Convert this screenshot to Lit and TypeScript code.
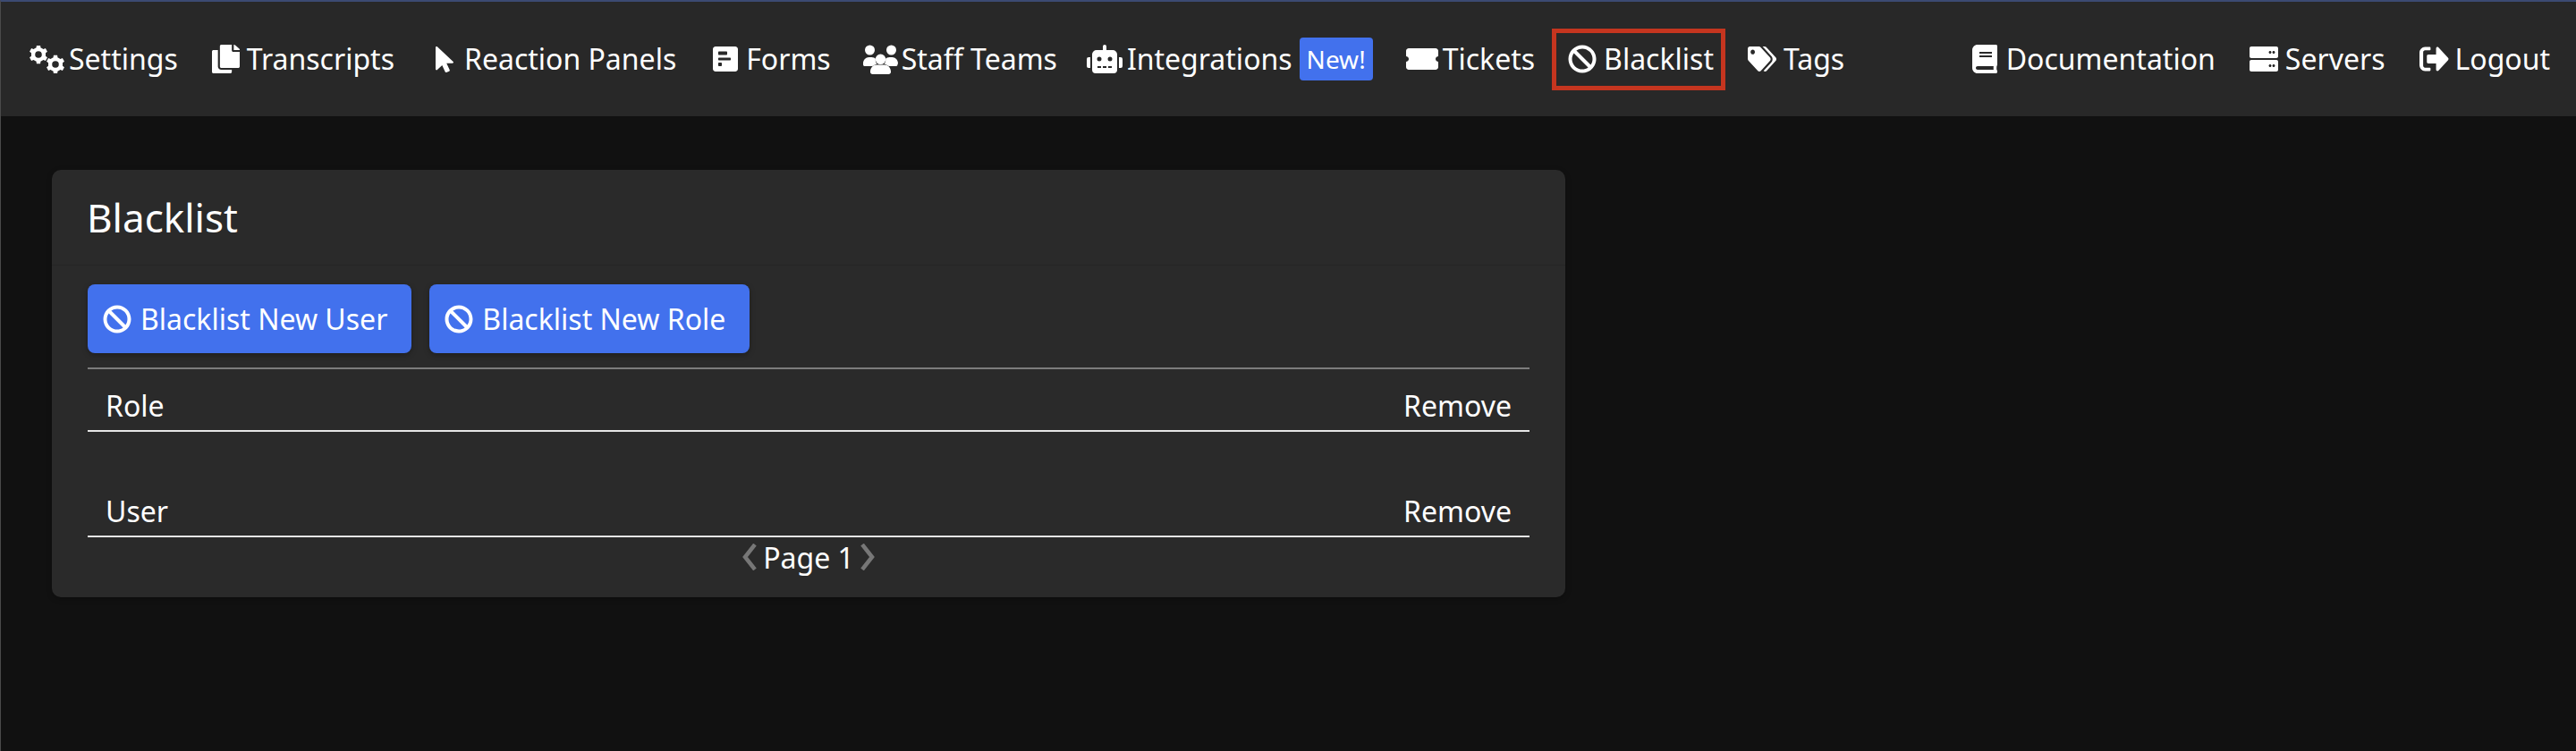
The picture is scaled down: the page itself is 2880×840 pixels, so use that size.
import { LitElement, css, html, svg } from "lit";
import { customElement } from "lit/decorators.js";

// six tooth gear with a round hole, used for the settings icon
const gear = (cx: number, cy: number, r: number) => {
  let d = "";
  const teeth = 6;
  for (let i = 0; i < teeth; i++) {
    const a = (i * Math.PI * 2) / teeth - Math.PI / 2;
    const spots = [
      [-0.3, r * 0.78],
      [-0.2, r],
      [0.2, r],
      [0.3, r * 0.78],
    ];
    for (const [da, len] of spots) {
      const x = (cx + Math.cos(a + da) * len).toFixed(2);
      const y = (cy + Math.sin(a + da) * len).toFixed(2);
      d += `${d ? "L" : "M"}${x} ${y}`;
    }
  }
  d += "Z";
  const h = r * 0.36;
  d += `M${cx - h} ${cy}a${h} ${h} 0 1 0 ${h * 2} 0a${h} ${h} 0 1 0 ${-h * 2} 0Z`;
  return d;
};

const BAN =
  "M256 8C119.034 8 8 119.033 8 256s111.034 248 248 248 248-111.034 248-248S392.967 8 256 8zm130.108 117.892c65.448 65.448 70 165.481 20.677 235.637L150.47 105.216c70.204-49.356 170.226-44.735 235.638 20.676zM125.892 386.108c-65.448-65.448-70-165.481-20.677-235.637L361.53 406.784c-70.203 49.356-170.226 44.736-235.638-20.676z";

interface Icon {
  box: string;
  w: number;
  h: number;
  d: string;
}

const ICONS: Record<string, Icon> = {
  cogs: { box: "0 0 39 31", w: 39, h: 31, d: gear(10, 10, 10.5) + gear(29, 21, 10.5) },
  copy: {
    box: "0 0 448 512",
    w: 31,
    h: 32,
    d: "M320 448v40c0 13.255-10.745 24-24 24H24c-13.255 0-24-10.745-24-24V120c0-13.255 10.745-24 24-24h72v296c0 30.879 25.121 56 56 56h168zm0-344V0H152c-13.255 0-24 10.745-24 24v368c0 13.255 10.745 24 24 24h272c13.255 0 24-10.745 24-24V128H344c-13.2 0-24-10.8-24-24zm120.971-31.029L375.029 7.029A24 24 0 0 0 358.059 0H352v96h96v-6.059a24 24 0 0 0-7.029-16.97z",
  },
  pointer: {
    box: "0 0 320 512",
    w: 20,
    h: 29,
    d: "M302.189 329.126H196.105l55.831 135.993c3.889 9.428-.555 19.999-9.444 23.999l-49.165 21.427c-9.165 4-19.443-.571-23.332-9.714l-53.053-129.136-86.664 89.138C18.729 472.71 0 463.554 0 447.977V18.299C0 1.899 19.921-6.096 30.277 5.443l284.412 292.542c11.472 11.179 3.007 31.141-12.5 31.141z",
  },
  poll: {
    box: "0 0 448 448",
    w: 28,
    h: 28,
    d: "M448 400V48c0-26.5-21.5-48-48-48H48C21.5 0 0 21.5 0 48v352c0 26.5 21.5 48 48 48h352c26.5 0 48-21.5 48-48zM112 152c-8.84 0-16-7.16-16-16v-32c0-8.84 7.16-16 16-16h128c8.84 0 16 7.16 16 16v32c0 8.84-7.16 16-16 16H112zm0 96c-8.84 0-16-7.16-16-16v-16c0-8.84 7.16-16 16-16h192c8.84 0 16 7.16 16 16v16c0 8.84-7.16 16-16 16H112zm0 104c-8.84 0-16-7.16-16-16v-32c0-8.84 7.16-16 16-16h32c8.84 0 16 7.16 16 16v32c0 8.84-7.16 16-16 16h-32z",
  },
  // side heads sit high, the middle person is in front and lower
  users: {
    box: "0 0 39 33",
    w: 39,
    h: 33,
    d: "M7.5 0.5a5.5 5.5 0 1 0 0 11a5.5 5.5 0 1 0 0-11ZM31.5 0.5a5.5 5.5 0 1 0 0 11a5.5 5.5 0 1 0 0-11ZM19.5 10.5a5.8 5.8 0 1 0 0 11.6a5.8 5.8 0 1 0 0-11.6ZM0 21c0-4 3-7 6.5-7h3c2 0 3.4 0.7 4.4 1.8c-0.4 2.2 0.2 4.2 1.4 5.7c-2 0.6-3.7 1.6-5 2.5H1.5C0.6 24 0 23 0 22ZM39 21c0-4-3-7-6.5-7h-3c-2 0-3.4 0.7-4.4 1.8c0.4 2.2-0.2 4.2-1.4 5.7c2 0.6 3.7 1.6 5 2.5h8.3c0.9 0 1.5-1 1.5-2ZM8 30c0-4.5 3.5-7.5 7-7.5h9c3.5 0 7 3 7 7.5v0.5c0 1.4-1.1 2.5-2.5 2.5h-18C9.100 33 8 31.900 8 30.500Z",
  },
  robot: {
    box: "0 0 640 512",
    w: 40,
    h: 32,
    d: "M32,224H64V416H32A31.96166,31.96166,0,0,1,0,384V256A31.96166,31.96166,0,0,1,32,224Zm512-48V448a64.06328,64.06328,0,0,1-64,64H160a64.06328,64.06328,0,0,1-64-64V176a79.974,79.974,0,0,1,80-80H288V32a32,32,0,0,1,64,0V96H464A79.974,79.974,0,0,1,544,176ZM264,256a40,40,0,1,0-40,40A39.997,39.997,0,0,0,264,256Zm-8,128H192v32h64Zm96,0H288v32h64ZM456,256a40,40,0,1,0-40,40A39.997,39.997,0,0,0,456,256Zm-8,128H384v32h64ZM640,256V384a31.96166,31.96166,0,0,1-32,32H576V224h32A31.96166,31.96166,0,0,1,640,256Z",
  },
  ticket: {
    box: "0 0 576 512",
    w: 36,
    h: 32,
    d: "M528 256c0 26.51 21.49 48 48 48v96c0 26.51-21.49 48-48 48H48c-26.51 0-48-21.49-48-48v-96c26.51 0 48-21.49 48-48s-21.49-48-48-48v-96c0-26.51 21.49-48 48-48h480c26.51 0 48 21.49 48 48v96c-26.51 0-48 21.49-48 48z",
  },
  ban: { box: "0 0 512 512", w: 32, h: 32, d: BAN },
  tags: {
    box: "0 0 640 512",
    w: 32,
    h: 28,
    d: "M497.941 225.941L286.059 14.059A48 48 0 0 0 252.118 0H48C21.49 0 0 21.49 0 48v204.118a48 48 0 0 0 14.059 33.941l211.882 211.882c18.744 18.745 49.136 18.746 67.882 0l204.118-204.118c18.745-18.745 18.745-49.137 0-67.882zM112 160c-26.51 0-48-21.49-48-48s21.49-48 48-48 48 21.49 48 48-21.49 48-48 48zm513.941 133.823L421.823 497.941c-18.745 18.745-49.137 18.745-67.882 0l-.36-.36L527.64 323.522c16.999-16.999 26.36-39.6 26.36-63.64s-9.362-46.641-26.36-63.64L331.397 0h48.721a48 48 0 0 1 33.941 14.059l211.882 211.882c18.745 18.745 18.745 49.137 0 67.882z",
  },
  book: {
    box: "0 0 448 512",
    w: 28,
    h: 32,
    d: "M448 360V24c0-13.3-10.7-24-24-24H96C43 0 0 43 0 96v320c0 53 43 96 96 96h328c13.3 0 24-10.7 24-24v-16c0-7.5-3.5-14.3-8.9-18.7-4.2-15.4-4.2-59.3 0-74.7 5.4-4.3 8.9-11.1 8.9-18.6zM128 134c0-3.3 2.7-6 6-6h212c3.3 0 6 2.7 6 6v20c0 3.3-2.7 6-6 6H134c-3.3 0-6-2.7-6-6v-20zm0 64c0-3.3 2.7-6 6-6h212c3.3 0 6 2.7 6 6v20c0 3.3-2.7 6-6 6H134c-3.3 0-6-2.7-6-6v-20zm253.4 250H96c-17.7 0-32-14.3-32-32 0-17.6 14.4-32 32-32h285.4c-1.9 17.1-1.9 46.9 0 64z",
  },
  server: {
    box: "0 0 512 448",
    w: 32,
    h: 28,
    d: "M480 208H32c-17.7 0-32-14.3-32-32V32C0 14.3 14.3 0 32 0h448c17.7 0 32 14.3 32 32v144c0 17.7-14.3 32-32 32zM432 80c-13.3 0-24 10.7-24 24s10.7 24 24 24 24-10.7 24-24-10.7-24-24-24zm-64 0c-13.3 0-24 10.7-24 24s10.7 24 24 24 24-10.7 24-24-10.7-24-24-24zM480 448H32c-17.7 0-32-14.3-32-32V272c0-17.7 14.3-32 32-32h448c17.7 0 32 14.3 32 32v144c0 17.7-14.3 32-32 32zM432 320c-13.3 0-24 10.7-24 24s10.7 24 24 24 24-10.7 24-24-10.7-24-24-24zm-64 0c-13.3 0-24 10.7-24 24s10.7 24 24 24 24-10.7 24-24-10.7-24-24-24z",
  },
  logout: {
    box: "0 56 512 400",
    w: 33,
    h: 28,
    d: "M497 273L329 441c-15 15-41 4.5-41-17v-96H152c-13.3 0-24-10.7-24-24v-96c0-13.3 10.7-24 24-24h136V88c0-21.4 25.9-32 41-17l168 168c9.3 9.4 9.3 24.6 0 34zM192 436v-30c0-6.6-5.4-12-12-12H96c-17.7 0-32-14.3-32-32V150c0-17.7 14.3-32 32-32h84c6.6 0 12-5.4 12-12V76c0-6.6-5.4-12-12-12H96c-53 0-96 43-96 96v192c0 53 43 96 96 96h84c6.6 0 12-5.4 12-12z",
  },
};

const icon = (name: string) => {
  const i = ICONS[name];
  return html`<svg
    class="icon"
    width=${i.w}
    height=${i.h}
    viewBox=${i.box}
    preserveAspectRatio="none"
    fill="currentColor"
    fill-rule="evenodd"
  >
    ${svg`<path d=${i.d}></path>`}
  </svg>`;
};

// gap = icon to label, before = space in front of the item
const LEFT_NAV = [
  { icon: "cogs", label: "Settings", gap: 5, before: 0 },
  { icon: "copy", label: "Transcripts", gap: 8, before: 38 },
  { icon: "pointer", label: "Reaction Panels", gap: 12, before: 46 },
  { icon: "poll", label: "Forms", gap: 9, before: 41 },
  { icon: "users", label: "Staff Teams", gap: 4, before: 36 },
  { icon: "robot", label: "Integrations", gap: 5, before: 33, badge: "New!" },
  { icon: "ticket", label: "Tickets", gap: 5, before: 37 },
  { icon: "ban", label: "Blacklist", gap: 8, before: 37, marked: true },
  { icon: "tags", label: "Tags", gap: 8, before: 38 },
];

const RIGHT_NAV = [
  { icon: "book", label: "Documentation", gap: 10, before: 0 },
  { icon: "server", label: "Servers", gap: 8, before: 38 },
  { icon: "logout", label: "Logout", gap: 7, before: 38 },
];

@customElement("app-root")
export class AppRoot extends LitElement {
  static styles = css`
    :host {
      display: block;
      font-family: "Noto Sans", "Open Sans", sans-serif;
      font-size: 32px;
      color: #fff;
    }

    * {
      box-sizing: border-box;
    }

    .page {
      height: 840px;
      overflow: hidden;
      background: #111;
      border-top: 2px solid #3c4a72;
      border-left: 1px solid #4a4a4a;
    }

    .nav {
      display: flex;
      align-items: center;
      justify-content: space-between;
      height: 128px;
      padding: 0 29px 0 32px;
      background: #282828;
    }

    .nav-group {
      display: flex;
      align-items: center;
    }

    .nav-item {
      display: flex;
      align-items: center;
      position: relative;
      line-height: 44px;
      white-space: nowrap;
    }

    .nav-item.marked::after {
      content: "";
      position: absolute;
      inset: -12px -13px -13px -18px;
      border: 5px solid #c5351f;
    }

    .icon {
      display: block;
      flex: none;
    }

    .badge {
      margin-left: 8px;
      padding: 0 8px;
      height: 48px;
      line-height: 48px;
      font-size: 28px;
      background: #4271ed;
      border-radius: 4px;
    }

    .main {
      padding: 60px 0 0 57px;
    }

    .card {
      width: 1692px;
      background: #2a2a2a;
      border-radius: 10px;
      box-shadow: 0 2px 6px rgba(0, 0, 0, 0.25);
    }

    .card-header {
      height: 107px;
      padding: 0 39px;
      display: flex;
      align-items: center;
      font-size: 44px;
      border-bottom: 1px solid #252525;
    }

    .card-body {
      padding: 21px 40px 0;
    }

    .actions {
      display: flex;
      gap: 20px;
      margin-bottom: 16px;
    }

    .btn {
      display: flex;
      align-items: center;
      gap: 10px;
      height: 77px;
      padding: 0 27px 0 17px;
      background: #4271ed;
      border-radius: 8px;
      box-shadow: 0 2px 6px rgba(0, 0, 0, 0.3);
    }

    .rule {
      height: 2px;
      background: #7c7c7c;
    }

    .row {
      display: flex;
      justify-content: space-between;
      height: 70px;
      padding: 19px 20px 0;
      line-height: 44px;
      border-bottom: 2px solid #e6e6e6;
    }

    .spacer {
      height: 48px;
    }

    .pager {
      display: flex;
      align-items: center;
      justify-content: center;
      gap: 6px;
      height: 67px;
      padding-bottom: 23px;
    }

    .chevron {
      display: block;
      color: #777;
    }
  `;

  private renderItem(item: {
    icon: string;
    label: string;
    gap: number;
    before: number;
    badge?: string;
    marked?: boolean;
  }) {
    return html`<div
      class="nav-item ${item.marked ? "marked" : ""}"
      style="margin-left:${item.before}px"
    >
      ${icon(item.icon)}
      <span style="margin-left:${item.gap}px">${item.label}</span>
      ${item.badge ? html`<span class="badge">${item.badge}</span>` : null}
    </div>`;
  }

  private chevron(points: string) {
    return html`<svg class="chevron" width="18" height="30" viewBox="0 0 18 30">
      <polyline points=${points} fill="none" stroke="currentColor" stroke-width="4.5"></polyline>
    </svg>`;
  }

  render() {
    return html`<div class="page">
      <nav class="nav">
        <div class="nav-group">${LEFT_NAV.map((i) => this.renderItem(i))}</div>
        <div class="nav-group">${RIGHT_NAV.map((i) => this.renderItem(i))}</div>
      </nav>
      <main class="main">
        <section class="card">
          <header class="card-header">Blacklist</header>
          <div class="card-body">
            <div class="actions">
              <div class="btn">${icon("ban")}<span>Blacklist New User</span></div>
              <div class="btn">${icon("ban")}<span>Blacklist New Role</span></div>
            </div>
            <div class="rule"></div>
            <div class="row"><span>Role</span><span>Remove</span></div>
            <div class="spacer"></div>
            <div class="row"><span>User</span><span>Remove</span></div>
            <div class="pager">
              ${this.chevron("15,1 4,15 15,29")}
              <span>Page 1</span>
              ${this.chevron("3,1 14,15 3,29")}
            </div>
          </div>
        </section>
      </main>
    </div>`;
  }
}
